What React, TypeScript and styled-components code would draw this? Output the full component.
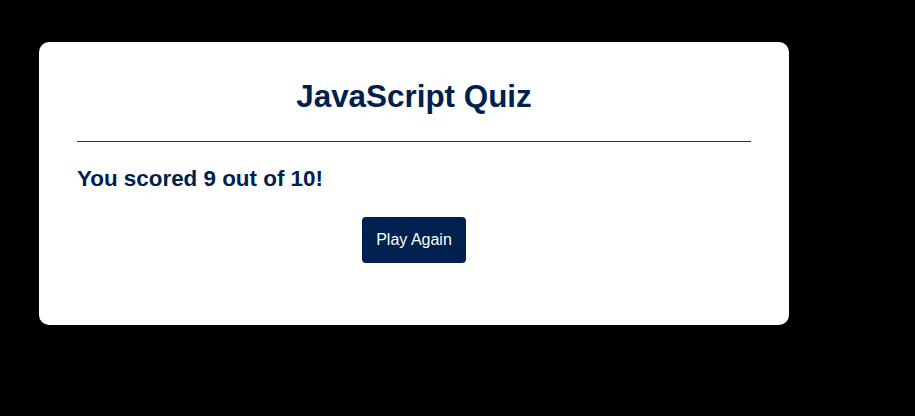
import React from "react";
import styled, { createGlobalStyle } from "styled-components";

const GlobalStyle = createGlobalStyle`
  html, body {
    margin: 0;
    padding: 0;
    background: #000000;
    font-family: "Liberation Sans", Arial, sans-serif;
  }
  * { box-sizing: border-box; }
`;

const Page = styled.div`
  min-height: 416px;
  padding: 42px 0 0 39px;
`;

const Card = styled.div`
  width: 750px;
  background: #ffffff;
  border-radius: 10px;
  padding: 36px 38px 62px;
  display: flex;
  flex-direction: column;
`;

const Title = styled.h1`
  margin: 0;
  font-size: 31.4px;
  line-height: 37px;
  font-weight: 700;
  text-align: center;
  color: #00204f;
`;

const Divider = styled.hr`
  margin: 26px 0 0;
  border: none;
  height: 1px;
  background: #333333;
`;

const Score = styled.h2`
  margin: 23px 0 0;
  font-size: 22.4px;
  line-height: 28px;
  font-weight: 700;
  color: #00204f;
`;

const ButtonRow = styled.div`
  display: flex;
  justify-content: center;
  margin-top: 24px;
`;

const Button = styled.button`
  height: 46px;
  padding: 0 14px;
  border: none;
  border-radius: 4px;
  background: #00204f;
  color: #ffffff;
  font-family: "Liberation Sans", Arial, sans-serif;
  font-size: 16px;
  cursor: pointer;
`;

export default function App() {
  return (
    <>
      <GlobalStyle />
      <Page>
        <Card>
          <Title>JavaScript Quiz</Title>
          <Divider />
          <Score>You scored 9 out of 10!</Score>
          <ButtonRow>
            <Button>Play Again</Button>
          </ButtonRow>
        </Card>
      </Page>
    </>
  );
}
